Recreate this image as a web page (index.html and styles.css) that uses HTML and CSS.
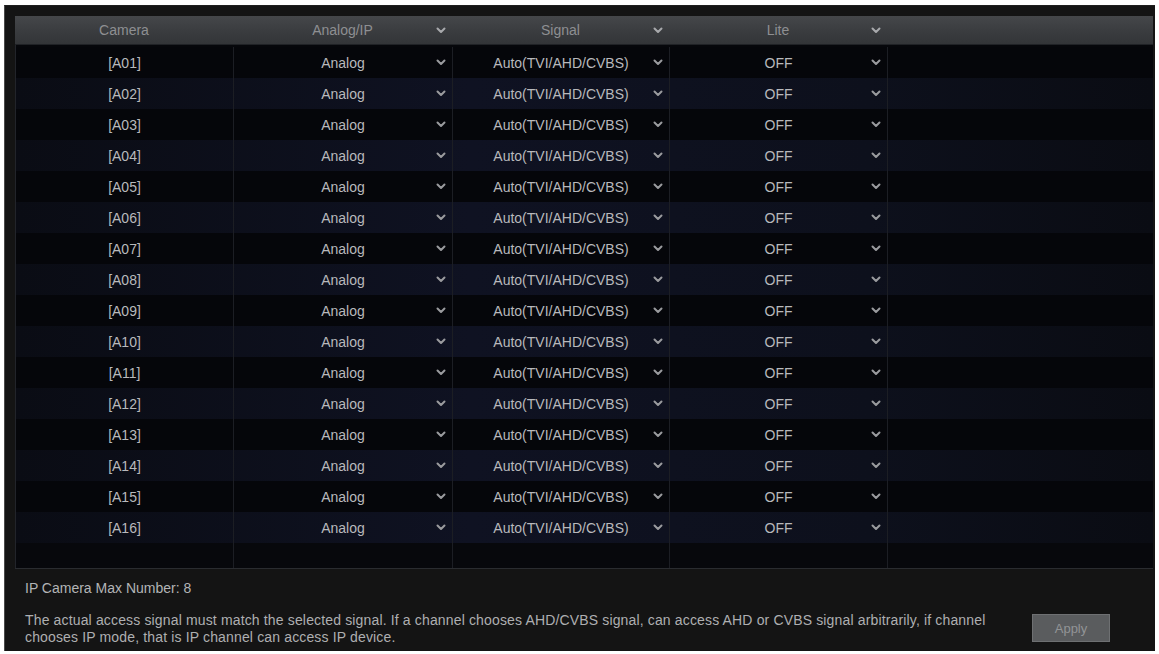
FILE: index.html
```html
<!DOCTYPE html>
<html lang="en">
<head>
<meta charset="utf-8">
<title>Channel Signal Settings</title>
<link rel="stylesheet" href="styles.css">
</head>
<body>
<div class="panel">
  <div class="grid-table">
    <div class="thead">
      <div class="th">Camera</div>
      <div class="th select"><span></span><span class="label">Analog/IP</span><svg class="chev" viewBox="0 0 10 7"><polyline points="1.5,1.5 5,5 8.5,1.5"/></svg></div>
      <div class="th select"><span></span><span class="label">Signal</span><svg class="chev" viewBox="0 0 10 7"><polyline points="1.5,1.5 5,5 8.5,1.5"/></svg></div>
      <div class="th select"><span></span><span class="label">Lite</span><svg class="chev" viewBox="0 0 10 7"><polyline points="1.5,1.5 5,5 8.5,1.5"/></svg></div>
      <div class="th"></div>
    </div>
    <div class="tbody" id="rows"></div>
  </div>
  <div class="footer">
    <div class="max-num">IP Camera Max Number: 8</div>
    <div class="note-row">
      <p class="note">The actual access signal must match the selected signal. If a channel chooses AHD/CVBS signal, can access AHD or CVBS signal arbitrarily, if channel<br>chooses IP mode, that is IP channel can access IP device.</p>
      <button class="apply" type="button">Apply</button>
    </div>
  </div>
</div>
<script src="app.js"></script>
</body>
</html>
```

FILE: app.js
```js
// Build the 16 analog channel rows plus the empty filler row
(function () {
  var body = document.getElementById('rows');
  var chev = '<svg class="chev" viewBox="0 0 10 7"><polyline points="1.5,1.5 5,5 8.5,1.5"/></svg>';
  function sel(text) {
    return '<div class="td select"><span></span><span class="label">' + text + '</span>' + chev + '</div>';
  }
  var html = '';
  for (var i = 1; i <= 16; i++) {
    var id = '[A' + (i < 10 ? '0' + i : i) + ']';
    html += '<div class="tr">' +
      '<div class="td">' + id + '</div>' +
      sel('Analog') +
      sel('Auto(TVI/AHD/CVBS)') +
      sel('OFF') +
      '<div class="td"></div>' +
      '</div>';
  }
  html += '<div class="tr filler"><div class="td"></div><div class="td"></div><div class="td"></div><div class="td"></div><div class="td"></div></div>';
  body.innerHTML = html;
})();
```

FILE: styles.css
```css
html, body {
  margin: 0;
  padding: 0;
  background: #ffffff;
}

body {
  font-family: "Liberation Sans", Arial, sans-serif;
}

.panel {
  box-sizing: border-box;
  width: 1151px;
  height: 646px;
  margin: 5px 0 0 4px;
  padding: 10px 3px 0 10px;
  background: #141414;
  border-left: 1px solid #4a4a4a;
  border-top: 1px solid #1e1e1e;
  display: flex;
  flex-direction: column;
}

.grid-table {
  width: 1138px;
  height: 553px;
  display: flex;
  flex-direction: column;
  background: #06070b;
  border-bottom: 1px solid #2a2c30;
  box-sizing: border-box;
}

.thead,
.tr {
  display: grid;
  grid-template-columns: 218px 219px 217px 218px 1fr;
}

.thead {
  height: 29px;
  background: linear-gradient(#45474a, #393b3e 60%, #333538);
  border-bottom: 1px solid #202226;
  box-sizing: border-box;
}

.th {
  display: flex;
  align-items: center;
  justify-content: center;
  color: #8e8f92;
  font-size: 14px;
}

.tbody {
  flex: 1;
  display: flex;
  flex-direction: column;
  padding-top: 2px;
  border-left: 1px solid #22242a;
}

.tr {
  height: 31px;
  background: #05060a;
}

.tr:nth-child(even) {
  background: linear-gradient(to right, #0a0c14, #0f1222 40%, #0d101c 75%, #0a0c13);
}

.tr.filler {
  flex: 1;
  height: auto;
  background: #07080c;
}

.td {
  display: flex;
  align-items: center;
  justify-content: center;
  color: #b8b9bc;
  font-size: 14px;
  border-right: 1px solid #1c1e24;
}

.td:last-child {
  border-right: none;
}

.th.select,
.td.select {
  display: grid;
  grid-template-columns: 22px 1fr 22px;
  align-items: center;
}

.select .label {
  text-align: center;
  white-space: nowrap;
}

.chev {
  width: 10px;
  height: 7px;
  justify-self: center;
  fill: none;
  stroke: #9a9b9e;
  stroke-width: 2;
  stroke-linecap: round;
  stroke-linejoin: round;
}

.th .chev {
  stroke: #a8a9ac;
}

.footer {
  padding: 11px 0 0 10px;
  color: #b3b4b6;
}

.max-num {
  font-size: 14px;
  line-height: 17px;
}

.note-row {
  display: flex;
  align-items: center;
  margin-top: 15px;
}

.note {
  margin: 0;
  width: 1000px;
  font-size: 14px;
  letter-spacing: 0.15px;
  line-height: 17px;
  color: #aeafb1;
}

.apply {
  width: 78px;
  height: 28px;
  margin-left: 7px;
  margin-top: -2px;
  padding: 0;
  background: #5a5c5e;
  border: 1px solid #6e7072;
  color: #929496;
  font-family: "Liberation Sans", Arial, sans-serif;
  font-size: 13px;
}
```
